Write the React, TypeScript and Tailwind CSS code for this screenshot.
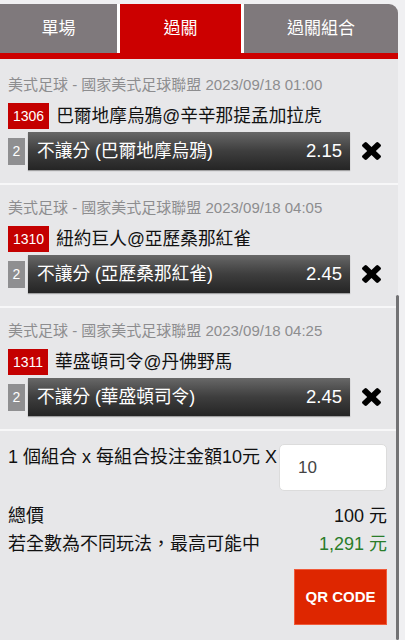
import React from "react";

const FONT = { fontFamily: '"Liberation Sans", "Noto Sans CJK TC", Arial, sans-serif' };

type Bet = { header: string; code: string; teams: string; pick: string; odds: string };

const bets: Bet[] = [
  {
    header: "美式足球 - 國家美式足球聯盟 2023/09/18 01:00",
    code: "1306",
    teams: "巴爾地摩烏鴉@辛辛那提孟加拉虎",
    pick: "不讓分 (巴爾地摩烏鴉)",
    odds: "2.15",
  },
  {
    header: "美式足球 - 國家美式足球聯盟 2023/09/18 04:05",
    code: "1310",
    teams: "紐約巨人@亞歷桑那紅雀",
    pick: "不讓分 (亞歷桑那紅雀)",
    odds: "2.45",
  },
  {
    header: "美式足球 - 國家美式足球聯盟 2023/09/18 04:25",
    code: "1311",
    teams: "華盛頓司令@丹佛野馬",
    pick: "不讓分 (華盛頓司令)",
    odds: "2.45",
  },
];

function CloseIcon() {
  return (
    <svg width="19" height="18" viewBox="302 366 1188 1188" preserveAspectRatio="none" fill="#000">
      <path d="M1490 1322q0 40-28 68l-136 136q-28 28-68 28t-68-28l-294-294-294 294q-28 28-68 28t-68-28l-136-136q-28-28-28-68t28-68l294-294-294-294q-28-28-28-68t28-68l136-136q28-28 68-28t68 28l294 294 294-294q28-28 68-28t68 28l136 136q28 28 28 68t-28 68l-294 294 294 294q28 28 28 68z" />
    </svg>
  );
}

function BetSection({ bet, first }: { bet: Bet; first: boolean }) {
  return (
    <div
      className={
        "bg-[#e7e7e9] pl-[8px] pb-[13px] border-b-2 border-[#f7f7f8] " +
        (first ? "pt-[16px]" : "pt-[13px]")
      }
    >
      <div className="text-[15px] leading-[20px] text-[#8d8d8f] whitespace-nowrap">{bet.header}</div>
      <div className="mt-[8px] flex items-center h-[26px]">
        <div className="bg-[#c40000] text-white text-[14px] h-[26px] leading-[26px] px-[5px]">{bet.code}</div>
        <div className="ml-[7px] text-[17.7px] text-[#111] leading-[26px] whitespace-nowrap">{bet.teams}</div>
      </div>
      <div className="mt-[3px] flex items-center">
        <div className="w-[17px] h-[27px] bg-[#8f8f91] text-white text-[14px] leading-[27px] text-center">2</div>
        <div className="ml-[3px] w-[322px] h-[38px] bg-linear-to-b from-[#686868] via-[#3e3e3e] to-[#252525] flex items-center justify-between pl-[9px] pr-[8px] text-white shadow-[0_1px_1px_rgba(0,0,0,0.3)]">
          <span className="text-[17.7px] whitespace-nowrap">{bet.pick}</span>
          <span className="text-[18.5px]">{bet.odds}</span>
        </div>
        <div className="ml-[12px] w-[19px] flex items-center justify-center">
          <CloseIcon />
        </div>
      </div>
    </div>
  );
}

export default function App() {
  return (
    <div className="relative w-[405px] h-[640px] overflow-hidden bg-[#f0f0f2]" style={FONT}>
      <div className="w-[398px] h-full flex flex-col pt-[4px]">
        <div className="flex h-[49px] shrink-0">
          <div className="w-[117px] bg-[#7f797c] text-white text-[17px] flex items-center justify-center">單場</div>
          <div className="w-[127px] bg-[#cc0000] border-x-[3px] border-white text-white text-[17px] flex items-center justify-center">
            過關
          </div>
          <div className="w-[154px] bg-[#7f797c] rounded-tr-[9px] text-white text-[17px] flex items-center justify-center">
            過關組合
          </div>
        </div>
        <div className="h-[6px] bg-[#cc0000] shrink-0" />
        {bets.map((b, i) => (
          <BetSection key={b.code} bet={b} first={i === 0} />
        ))}
        <div className="flex-1 bg-[#e7e7e9] pl-[8px] pr-[11px] pt-[13px] flex flex-col">
          <div className="flex items-start justify-between">
            <div className="text-[18px] leading-[24px] mt-[1px] text-[#111] whitespace-nowrap">
              1 個組合 x 每組合投注金額10元 X
            </div>
            <div className="w-[108px] h-[47px] bg-white rounded-[5px] border border-[#dcdcdc] flex items-center pl-[18px] text-[17px] text-[#444]">
              10
            </div>
          </div>
          <div className="mt-[11px] h-[28px] flex items-center justify-between text-[18px] text-[#111]">
            <span>總價</span>
            <span>100 元</span>
          </div>
          <div className="h-[28px] flex items-center justify-between text-[18px] text-[#111]">
            <span>若全數為不同玩法，最高可能中</span>
            <span className="text-[#2a7d2a]">1,291 元</span>
          </div>
          <button className="mt-[11px] self-end w-[93px] h-[56px] bg-[#de2600] border border-[#f05a3a] text-white font-bold text-[15px]">
            QR CODE
          </button>
        </div>
      </div>
      <div className="absolute left-[396px] top-[295px] w-[3px] bottom-0 bg-[#727274] rounded-full" />
    </div>
  );
}
